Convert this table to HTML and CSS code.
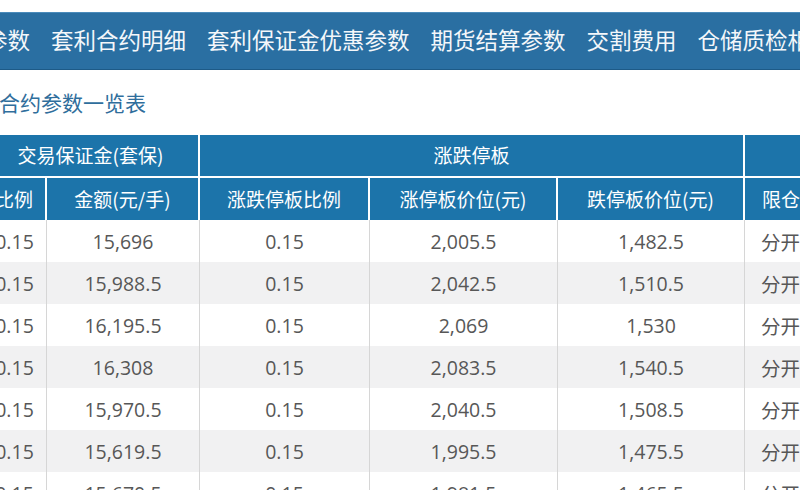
FILE: index.html
```html
<!DOCTYPE html>
<html lang="zh-CN">
<head>
<meta charset="utf-8">
<title>合约参数一览表</title>
<link rel="stylesheet" href="styles.css">
</head>
<body>
<nav class="nav">
  <ul class="nav-list">
    <li>合约参数</li>
    <li>套利合约明细</li>
    <li>套利保证金优惠参数</li>
    <li>期货结算参数</li>
    <li>交割费用</li>
    <li>仓储质检相关费用</li>
  </ul>
</nav>
<h2 class="title">合约参数一览表</h2>
<div class="table-wrap">
  <table class="grid">
    <colgroup>
      <col class="c1"><col class="c2"><col class="c3"><col class="c4"><col class="c5"><col class="c6">
    </colgroup>
    <thead>
      <tr class="group-row">
        <th colspan="2">交易保证金(套保)</th>
        <th colspan="3">涨跌停板</th>
        <th class="last">限仓</th>
      </tr>
      <tr class="sub-row">
        <th>比例</th>
        <th>金额(元/手)</th>
        <th>涨跌停板比例</th>
        <th>涨停板价位(元)</th>
        <th>跌停板价位(元)</th>
        <th class="last">限仓比例</th>
      </tr>
    </thead>
    <tbody>
      <tr><td>0.15</td><td>15,696</td><td>0.15</td><td>2,005.5</td><td>1,482.5</td><td>分开计算</td></tr>
      <tr><td>0.15</td><td>15,988.5</td><td>0.15</td><td>2,042.5</td><td>1,510.5</td><td>分开计算</td></tr>
      <tr><td>0.15</td><td>16,195.5</td><td>0.15</td><td>2,069</td><td>1,530</td><td>分开计算</td></tr>
      <tr><td>0.15</td><td>16,308</td><td>0.15</td><td>2,083.5</td><td>1,540.5</td><td>分开计算</td></tr>
      <tr><td>0.15</td><td>15,970.5</td><td>0.15</td><td>2,040.5</td><td>1,508.5</td><td>分开计算</td></tr>
      <tr><td>0.15</td><td>15,619.5</td><td>0.15</td><td>1,995.5</td><td>1,475.5</td><td>分开计算</td></tr>
      <tr><td>0.15</td><td>15,670.5</td><td>0.15</td><td>1,981.5</td><td>1,465.5</td><td>分开计算</td></tr>
    </tbody>
  </table>
</div>
</body>
</html>
```

FILE: styles.css
```css
html, body {
  margin: 0;
  padding: 0;
  background: #ffffff;
  overflow: hidden;
}

body {
  width: 800px;
  height: 500px;
  font-family: "Open Sans", "Noto Sans CJK SC", sans-serif;
}

.nav {
  margin-top: 12px;
  height: 56px;
  background: #2a6fa2;
  border-top: 1px solid #4a8bbb;
  border-bottom: 1px solid #1d5a87;
  box-sizing: border-box;
  height: 58px;
  overflow: hidden;
  white-space: nowrap;
}

.nav-list {
  list-style: none;
  margin: 0 0 0 -60px;
  padding: 0;
  display: flex;
  gap: 21px;
  height: 100%;
  align-items: center;
}

.nav-list li {
  flex: none;
  color: #f4f7fa;
  font-family: "Noto Sans CJK SC", sans-serif;
  font-size: 22.5px;
  line-height: 1;
  padding-bottom: 4px;
}

.title {
  margin: 17px 0 0 -1px;
  height: 48px;
  font-family: "Noto Sans CJK SC", sans-serif;
  font-weight: normal;
  font-size: 21px;
  line-height: 30px;
  color: #2f6e9c;
}

.table-wrap {
  height: 355px;
  overflow: hidden;
  margin-left: -17px;
  width: 900px;
}

.grid {
  border-collapse: separate;
  border-spacing: 0;
  table-layout: fixed;
  width: 872px;
}

.c1 { width: 64px; }
.c2 { width: 153px; }
.c3 { width: 170px; }
.c4 { width: 188px; }
.c5 { width: 187px; }
.c6 { width: 110px; }

.grid th {
  background: #1c74aa;
  color: #ffffff;
  font-family: "Noto Sans CJK SC", sans-serif;
  font-weight: normal;
  font-size: 19px;
  text-align: center;
  padding: 0;
  border-right: 2px solid #ffffff;
  white-space: nowrap;
  overflow: hidden;
}

.grid th.last {
  border-right: none;
}

.group-row th {
  height: 43px;
  border-bottom: 2px solid #ffffff;
  padding-bottom: 2px;
  box-sizing: border-box;
}

.group-row th.last {
  color: #1c74aa;
}

.sub-row th {
  height: 42px;
  box-sizing: border-box;
  padding-bottom: 2px;
}

.grid td {
  height: 42px;
  padding: 0;
  text-align: center;
  font-size: 19.5px;
  color: #575757;
  border-right: 1px solid #d6d6d6;
  white-space: nowrap;
  overflow: hidden;
}

.grid td:last-child {
  border-right: none;
}

.grid tbody tr:nth-child(even) td {
  background: #f1f1f2;
}
```
